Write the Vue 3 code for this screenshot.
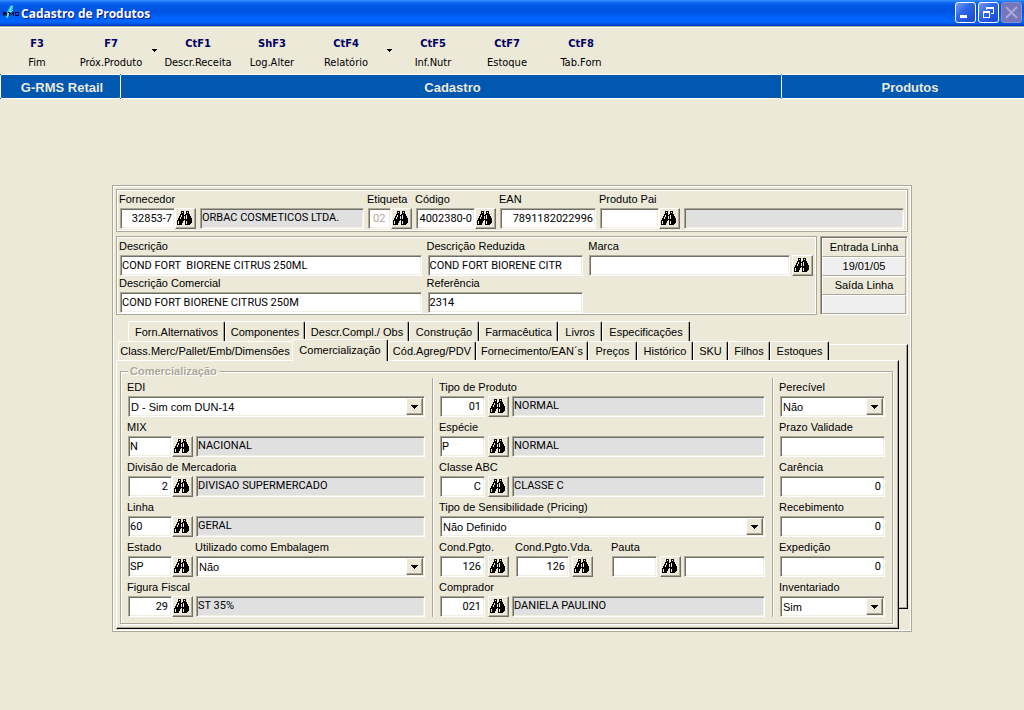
<script setup>
import { reactive } from 'vue'

const toPath = (rows) =>
  rows
    .flatMap((row, y) => [...row.matchAll(/#+/g)].map((m) => `M${m.index} ${y}h${m[0].length}v1h-${m[0].length}z`))
    .join('')

const binoculars = toPath([
  '....###..###...',
  '....#.#..#.#...',
  '....###..###...',
  '...####.#####..',
  '...#.####.###..',
  '..##.##.#.####.',
  '..#.###.#.####.',
  '.##.###.#.#####',
  '.##############',
  '#######.#######',
  '#.####..#.#####',
  '#.####..#.#####',
  '#.###...#.####.',
  '#####...#####..'
])

const tools = [
  { key: 'F3', label: 'Fim' },
  { key: 'F7', label: 'Próx.Produto', menu: true },
  { key: 'CtF1', label: 'Descr.Receita' },
  { key: 'ShF3', label: 'Log.Alter' },
  { key: 'CtF4', label: 'Relatório', menu: true },
  { key: 'CtF5', label: 'Inf.Nutr' },
  { key: 'CtF7', label: 'Estoque' },
  { key: 'CtF8', label: 'Tab.Forn' }
]

const header = reactive([
  { id: 'fornecedor', label: 'Fornecedor', width: 76, value: '32853-7', right: true, lookup: true },
  { id: 'fornecedor-nome', name: 'Nome do fornecedor', grow: 164, value: 'ORBAC COSMETICOS LTDA.', display: true },
  { id: 'etiqueta', label: 'Etiqueta', width: 44, value: '02', disabled: true, lookup: true },
  { id: 'codigo', label: 'Código', width: 80, value: '4002380-0', right: true, lookup: true },
  { id: 'ean', label: 'EAN', width: 96, value: '7891182022996', right: true },
  { id: 'produto-pai', label: 'Produto Pai', width: 80, value: '', lookup: true },
  { id: 'produto-pai-nome', name: 'Nome do produto pai', grow: 220, value: '', display: true }
])

const backTabs = [
  { label: 'Forn.Alternativos', width: 97 },
  { label: 'Componentes', width: 80 },
  { label: 'Descr.Compl./ Obs', width: 104 },
  { label: 'Construção', width: 70 },
  { label: 'Farmacêutica', width: 79 },
  { label: 'Livros', width: 44 },
  { label: 'Especificações', width: 88 }
]

const frontTabs = [
  { label: 'Class.Merc/Pallet/Emb/Dimensões', width: 174 },
  { label: 'Comercialização', width: 96, selected: true },
  { label: 'Cód.Agreg/PDV', width: 88 },
  { label: 'Fornecimento/EAN´s', width: 112 },
  { label: 'Preços', width: 49 },
  { label: 'Histórico', width: 56 },
  { label: 'SKU', width: 35 },
  { label: 'Filhos', width: 42 },
  { label: 'Estoques', width: 59 }
]

const columns = reactive([
  {
    name: 'left',
    rows: [
      [{ id: 'edi', label: 'EDI', grow: 1, value: 'D - Sim com DUN-14', select: true }],
      [
        { id: 'mix', label: 'MIX', width: 65, value: 'N', lookup: true },
        { id: 'mix-nome', name: 'Nome do mix', grow: 1, value: 'NACIONAL', display: true }
      ],
      [
        { id: 'divisao', label: 'Divisão de Mercadoria', width: 65, value: '2', right: true, lookup: true },
        { id: 'divisao-nome', name: 'Nome da divisão', grow: 1, value: 'DIVISAO SUPERMERCADO', display: true }
      ],
      [
        { id: 'linha', label: 'Linha', width: 65, value: '60', lookup: true },
        { id: 'linha-nome', name: 'Nome da linha', grow: 1, value: 'GERAL', display: true }
      ],
      [
        { id: 'estado', label: 'Estado', width: 65, value: 'SP', lookup: true },
        { id: 'embalagem', label: 'Utilizado como Embalagem', grow: 1, value: 'Não', select: true }
      ],
      [
        { id: 'figura', label: 'Figura Fiscal', width: 65, value: '29', right: true, lookup: true },
        { id: 'figura-nome', name: 'Nome da figura fiscal', grow: 1, value: 'ST 35%', display: true }
      ]
    ]
  },
  {
    name: 'middle',
    rows: [
      [
        { id: 'tipo', label: 'Tipo de Produto', width: 69, value: '01', right: true, lookup: true },
        { id: 'tipo-nome', name: 'Nome do tipo', grow: 1, value: 'NORMAL', display: true }
      ],
      [
        { id: 'especie', label: 'Espécie', width: 69, value: 'P', lookup: true },
        { id: 'especie-nome', name: 'Nome da espécie', grow: 1, value: 'NORMAL', display: true }
      ],
      [
        { id: 'classe', label: 'Classe ABC', width: 69, value: 'C', right: true, lookup: true },
        { id: 'classe-nome', name: 'Nome da classe', grow: 1, value: 'CLASSE C', display: true }
      ],
      [{ id: 'sensibilidade', label: 'Tipo de Sensibilidade (Pricing)', grow: 1, value: 'Não Definido', select: true }],
      [
        { id: 'cond', label: 'Cond.Pgto.', width: 69, value: '126', right: true, lookup: true },
        { id: 'cond-vda', label: 'Cond.Pgto.Vda.', width: 77, lead: 4, value: '126', right: true, lookup: true },
        { id: 'pauta', label: 'Pauta', width: 69, lead: 16, value: '', lookup: true },
        { id: 'pauta-valor', name: 'Valor da pauta', grow: 1, value: '' }
      ],
      [
        { id: 'comprador', label: 'Comprador', width: 69, value: '021', right: true, lookup: true },
        { id: 'comprador-nome', name: 'Nome do comprador', grow: 1, value: 'DANIELA PAULINO', display: true }
      ]
    ]
  },
  {
    name: 'right',
    rows: [
      [{ id: 'perecivel', label: 'Perecível', grow: 1, value: 'Não', select: true }],
      [{ id: 'prazo', label: 'Prazo Validade', grow: 1, value: '', right: true }],
      [{ id: 'carencia', label: 'Carência', grow: 1, value: '0', right: true }],
      [{ id: 'recebimento', label: 'Recebimento', grow: 1, value: '0', right: true }],
      [{ id: 'expedicao', label: 'Expedição', grow: 1, value: '0', right: true }],
      [{ id: 'inventariado', label: 'Inventariado', grow: 1, value: 'Sim', select: true }]
    ]
  }
])

const description = reactive({
  full: 'COND FORT  BIORENE CITRUS 250ML',
  short: 'COND FORT BIORENE CITR',
  brand: '',
  commercial: 'COND FORT BIORENE CITRUS 250M',
  reference: '2314'
})

const sizing = (f) => ({
  flex: f.grow ? `${f.grow} 1 0` : `0 0 ${f.width}px`,
  marginLeft: f.lead ? `${f.lead}px` : null
})
</script>

<template>
  <div class="window">
    <svg class="defs" width="0" height="0" aria-hidden="true">
      <symbol id="binoculars" viewBox="0 0 15 14"><path :d="binoculars" /></symbol>
      <symbol id="arrow" viewBox="0 0 7 4"><path d="M0 0h7v1h-1v1h-1v1h-1v1h-1v-1h-1v-1h-1v-1h-1z" /></symbol>
    </svg>

    <header class="titlebar">
      <svg class="logo" width="17" height="16" viewBox="0 0 17 16" aria-hidden="true">
        <path d="M4 14L5 8L8 2L11 1V5L8 9L6 14Z" fill="#16c4d8" />
        <path d="M5 13L10 2M7 9L11 6" stroke="#9af4f0" fill="none" />
        <path d="M1 8h3v1h1v1h-1v1h1v1h-1v-1h-2v1h-1zM6 8h2v1h1v1h1v-1h1v-1h1v4h-1v-2h-1v1h-1v-1h-1v2h-1v-3h-1zM13 8h4v1h-3v1h3v2h-4v-1h3v-1h-3z" fill="#000028" />
      </svg>
      <h1>Cadastro de Produtos</h1>
      <button class="caption" type="button" aria-label="Minimizar">
        <svg width="19" height="19"><path d="M4 12h7v3h-7z" fill="#fff" /></svg>
      </button>
      <button class="caption" type="button" aria-label="Restaurar">
        <svg width="19" height="19" fill="#fff">
          <path d="M7 4h8v7h-3v-1h2v-4h-6v1h-1z" />
          <path fill-rule="evenodd" d="M4 8h7v7h-7zM5 10v4h5v-4z" />
        </svg>
      </button>
      <button class="caption close" type="button" aria-label="Fechar">
        <svg width="19" height="19" stroke="#aaa8d4" stroke-width="2"><path d="M4 4L15 15M15 4L4 15" /></svg>
      </button>
    </header>

    <nav class="toolbar" aria-label="Ações">
      <template v-for="t in tools" :key="t.key">
        <button class="tool" type="button"><b>{{ t.key }}</b><span>{{ t.label }}</span></button>
        <button v-if="t.menu" class="more" type="button" :aria-label="`Opções de ${t.label}`">
          <svg width="5" height="3"><path d="M0 0h5v1h-1v1h-1v1h-1v-1h-1v-1h-1z" /></svg>
        </button>
      </template>
    </nav>

    <div class="crumbs"><span>G-RMS Retail</span><span>Cadastro</span><span>Produtos</span></div>

    <main class="panel">
      <section class="box header-fields">
        <div v-for="f in header" :key="f.id" class="field" :style="sizing(f)">
          <label v-if="f.label" :for="f.id">{{ f.label }}</label>
          <div class="control">
            <input
              :id="f.id"
              v-model="f.value"
              type="text"
              class="snug"
              :class="{ end: f.right, display: f.display }"
              :readonly="f.display"
              :disabled="f.disabled"
              :aria-label="f.name"
            />
            <button v-if="f.lookup" class="lookup" type="button" :aria-label="`Pesquisar ${f.label}`">
              <svg width="15" height="14"><use href="#binoculars" /></svg>
            </button>
          </div>
        </div>
      </section>

      <div class="summary">
        <section class="box descriptions">
          <div class="field">
            <label for="descricao">Descrição</label>
            <div class="control"><input id="descricao" v-model="description.full" type="text" /></div>
          </div>
          <div class="field">
            <label for="reduzida">Descrição Reduzida</label>
            <div class="control"><input id="reduzida" v-model="description.short" type="text" /></div>
          </div>
          <div class="field">
            <label for="marca">Marca</label>
            <div class="control brand">
              <input id="marca" v-model="description.brand" type="text" />
              <button class="lookup" type="button" aria-label="Pesquisar Marca">
                <svg width="15" height="14"><use href="#binoculars" /></svg>
              </button>
            </div>
          </div>
          <div class="field">
            <label for="comercial">Descrição Comercial</label>
            <div class="control"><input id="comercial" v-model="description.commercial" type="text" /></div>
          </div>
          <div class="field">
            <label for="referencia">Referência</label>
            <div class="control"><input id="referencia" v-model="description.reference" type="text" /></div>
          </div>
        </section>
        <dl class="dates">
          <dt>Entrada Linha</dt>
          <dd>19/01/05</dd>
          <dt>Saída Linha</dt>
          <dd></dd>
        </dl>
      </div>

      <div class="tabs upper" role="tablist">
        <button v-for="t in backTabs" :key="t.label" class="tab" type="button" role="tab" :style="{ flexBasis: t.width + 'px' }">
          {{ t.label }}
        </button>
      </div>
      <div class="sheets">
        <div class="back-sheet"></div>
        <div class="tabs lower" role="tablist">
          <button
            v-for="t in frontTabs"
            :key="t.label"
            class="tab"
            type="button"
            role="tab"
            :class="{ selected: t.selected }"
            :aria-selected="!!t.selected"
            :style="{ flexBasis: t.width + 'px' }"
          >
            {{ t.label }}
          </button>
        </div>
        <div class="sheet" role="tabpanel">
          <fieldset>
            <legend>Comercialização</legend>
            <div class="columns">
              <div v-for="c in columns" :key="c.name" class="column" :class="c.name">
                <div v-for="(row, i) in c.rows" :key="i" class="row">
                  <div v-for="f in row" :key="f.id" class="field" :style="sizing(f)">
                    <label v-if="f.label" :for="f.id">{{ f.label }}</label>
                    <div class="control">
                      <template v-if="f.select">
                        <select :id="f.id" v-model="f.value"><option>{{ f.value }}</option></select>
                        <span class="drop"><svg width="7" height="4"><use href="#arrow" /></svg></span>
                      </template>
                      <input
                        v-else
                        :id="f.id"
                        v-model="f.value"
                        type="text"
                        :class="{ end: f.right, display: f.display }"
                        :readonly="f.display"
                        :aria-label="f.name"
                      />
                      <button v-if="f.lookup" class="lookup" type="button" :aria-label="`Pesquisar ${f.label}`">
                        <svg width="15" height="14"><use href="#binoculars" /></svg>
                      </button>
                    </div>
                  </div>
                </div>
              </div>
            </div>
          </fieldset>
        </div>
      </div>
    </main>
  </div>
</template>

<style>
body {
  background: #ece9d8;
}
</style>

<style scoped>
.window {
  min-height: 100vh;
  background: #ece9d8;
  color: #000;
  font: 11px/14px "Liberation Sans", Arial, sans-serif;
}
.window * {
  box-sizing: border-box;
}
.defs {
  position: absolute;
}
button,
input,
select {
  margin: 0;
  padding: 0;
  border: 0;
  border-radius: 0;
  background: none;
  color: inherit;
  font: inherit;
}
svg {
  display: block;
  flex: none;
}

.titlebar {
  display: flex;
  align-items: center;
  gap: 2px;
  height: 26px;
  padding: 0 2px 1px;
  background: linear-gradient(#3a93ff 0, #1471f5 2px, #0058e6 5px, #0053e1 12px, #0061fb 17px, #0066ff 22px, #0050dc 24px, #003cc0 26px);
}
.logo {
  margin-top: -2px;
}
h1 {
  flex: 1;
  margin: 0;
  padding-top: 2px;
  color: #fff;
  font: bold 12px/20px "Open Sans", "Noto Sans", sans-serif;
  text-shadow: 1px 1px #0a1883;
}
.caption {
  width: 21px;
  height: 21px;
  border: 1px solid #fff;
  border-radius: 3px;
  background: linear-gradient(135deg, #7a9cf0, #3067e8 40%, #1c50dd 80%, #1a4fc0);
}
.close {
  border-color: #8d8dcb;
  background: #7577bb;
}

.toolbar {
  display: flex;
  height: 48px;
  border-top: 1px solid #aca899;
  box-shadow: inset 0 1px #fff;
  font-family: "DejaVu Sans Condensed", "DejaVu Sans", sans-serif;
}
.tool {
  display: flex;
  flex: 0 0 74px;
  flex-direction: column;
  align-items: center;
  gap: 5px;
  padding-top: 10px;
  white-space: nowrap;
}
.tool b {
  color: #000064;
}
.more {
  display: flex;
  flex: 0 0 13px;
  align-items: center;
  justify-content: center;
}

.crumbs {
  display: grid;
  grid-template-columns: 121px 661fr 242fr;
  height: 25px;
  color: #ece9d8;
  font-size: 13px;
  font-weight: bold;
  line-height: 25px;
  text-align: center;
  background: #0058b0;
}
.crumbs span {
  height: 25px;
  padding-left: 3px;
  border: 1px solid #fff;
  border-left-width: 0;
  border-radius: 0 2px 2px 0;
}
.crumbs span:first-child {
  border-left-width: 1px;
  border-radius: 2px;
}
.crumbs span:last-child {
  padding-left: 14px;
  border-right: 0;
  border-radius: 0;
}

.panel {
  width: 100%;
  max-width: 800px;
  margin: 86px auto 0;
  padding: 3px 3px 2px;
  border: 1px solid #aca899;
  box-shadow: inset 1px 1px #fff, inset -1px -1px #fff;
}
.box {
  padding: 3px 3px 2px;
  border: 1px solid #aca899;
  box-shadow: inset 1px 1px #fff, inset -1px -1px #fff;
}
.header-fields {
  display: flex;
  align-items: flex-end;
  gap: 4px;
}

.field {
  display: flex;
  flex-direction: column;
  gap: 3px;
  min-width: 0;
}
.field label {
  margin-left: -1px;
  line-height: 12px;
  white-space: nowrap;
}
.control {
  position: relative;
  display: flex;
}
input,
select {
  flex: 1;
  width: 0;
  min-width: 0;
  height: 21px;
  border: 1px solid;
  border-color: #aca899 #fff #fff #aca899;
  background: #fff;
  box-shadow: inset 1px 1px #716f64, inset -1px -1px #f1efe2;
}
input {
  padding: 0 3px 0 1px;
  font-family: Roboto, "Liberation Sans", sans-serif;
}
select {
  padding-left: 2px;
  appearance: none;
}
input.snug {
  padding-right: 2px;
}
.end {
  text-align: right;
}
input.display {
  padding-bottom: 2px;
  background: #e0e0e0;
}
input:disabled {
  padding-left: 4px;
  color: #aca899;
}
.lookup,
.drop {
  display: flex;
  align-items: center;
  justify-content: center;
  border: 1px solid;
  border-color: #fff #716f64 #716f64 #fff;
  background: #ece9d8;
  box-shadow: inset -1px -1px #aca899;
}
.lookup {
  flex: 0 0 21px;
  height: 21px;
  padding: 0 2px 1px 0;
}
.drop {
  position: absolute;
  top: 2px;
  right: 2px;
  bottom: 2px;
  width: 17px;
  pointer-events: none;
}

.summary {
  display: flex;
  gap: 3px;
  margin-top: 4px;
}
.descriptions {
  display: grid;
  flex: 1;
  grid-template-columns: 302fr 156fr 224fr;
  gap: 1px 6px;
  padding-bottom: 1px;
}
.brand {
  gap: 2px;
}
.dates {
  flex: 0 0 88px;
  margin: 0;
  padding: 1px 1px 0;
  border: 1px solid;
  border-color: #aca899 #fff #fff #aca899;
  box-shadow: inset 1px 1px #716f64;
  text-align: center;
}
.dates dt,
.dates dd {
  height: 19px;
  margin: 0;
  border: 1px solid;
  border-color: #fff #aca899 #aca899 #fff;
  line-height: 17px;
}
.dates dd {
  background: #efefef;
}

.tabs {
  display: flex;
}
.upper {
  margin-top: 6px;
  padding-left: 12px;
}
.lower {
  z-index: 1;
  grid-area: 1 / 1 / 2 / 3;
  align-items: flex-end;
  padding-left: 2px;
}
.tab {
  flex: 0 0 auto;
  height: 20px;
  border: 1px solid;
  border-color: #fff #000 transparent #fff;
  border-bottom: 0;
  border-radius: 2px 2px 0 0;
  background: #ece9d8;
  box-shadow: inset -1px 0 #aca899;
  white-space: nowrap;
}
.lower .tab {
  height: 19px;
}
.lower .tab:first-child {
  border-right-color: #ece9d8;
  box-shadow: none;
}
.lower .selected {
  height: 22px;
  margin: -2px 0 -1px;
  padding-bottom: 2px;
}
.sheets {
  display: grid;
  grid-template-columns: 1fr 9px;
  grid-template-rows: 19px auto;
}
.back-sheet {
  grid-area: 1 / 1 / 3 / 3;
  margin: 3px 0 20px 20px;
  border: 1px solid;
  border-color: #fff #000 #000 #fff;
  box-shadow: inset -1px -1px #aca899;
}
.sheet {
  grid-area: 2 / 1 / 3 / 2;
  padding: 3px 5px 4px 3px;
  border: 1px solid;
  border-color: #fff #000 #000 #fff;
  background: #ece9d8;
  box-shadow: inset -1px -1px #aca899;
}
fieldset {
  min-width: 0;
  margin: 0;
  padding: 0 7px 6px;
  border: 1px solid #aca899;
  box-shadow: inset 1px 1px #fff, 1px 1px #fff;
}
legend {
  padding: 0 2px;
  background: #ece9d8;
  color: #aca899;
  font-weight: bold;
  text-shadow: 1px 1px #fff;
}
.columns {
  display: grid;
  grid-template-columns: 297fr 340fr 120fr;
}
.column {
  display: flex;
  flex-direction: column;
  gap: 4px;
  min-width: 0;
  padding-top: 3px;
}
.middle,
.right {
  margin-left: 7px;
  padding-left: 7px;
  border-left: 1px solid #aca899;
  box-shadow: inset 1px 0 #fff;
}
.row {
  display: flex;
  align-items: flex-end;
  gap: 3px;
}
.middle .control {
  gap: 3px;
}
</style>
